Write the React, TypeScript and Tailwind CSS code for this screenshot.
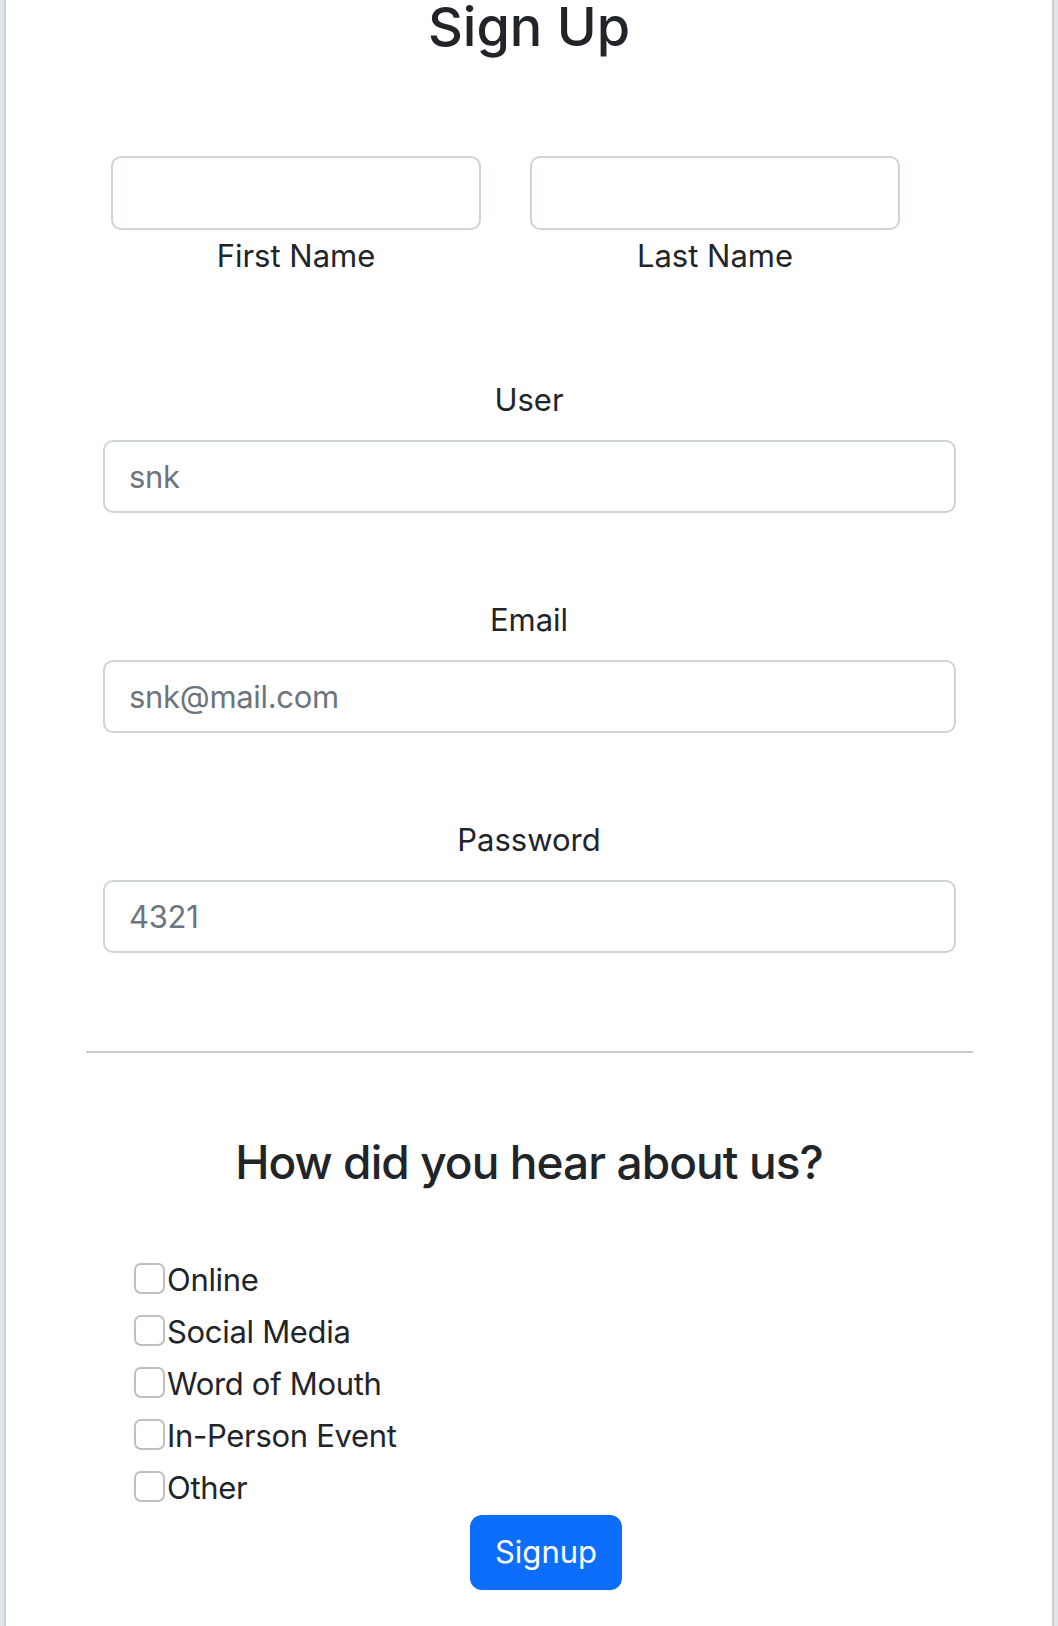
import React from "react";

const font = { fontFamily: 'Inter, "Noto Sans", sans-serif' };

function Field({ label, placeholder }: { label: string; placeholder: string }) {
  return (
    <div>
      <label className="block text-center text-[31px] leading-[48px] text-[#212529]">{label}</label>
      <input
        type="text"
        placeholder={placeholder}
        className="mt-[16px] ml-[97px] block h-[73px] w-[853px] rounded-[10px] border-2 border-[#ced4da] bg-white px-[24px] text-[31px] tracking-[-0.01em] text-[#212529] placeholder:text-[#6c757d] outline-none"
      />
    </div>
  );
}

const options = ["Online", "Social Media", "Word of Mouth", "In-Person Event", "Other"];

export default function App() {
  return (
    <div className="min-h-screen bg-[#dfe5e9] px-[4px]" style={font}>
      <div className="min-h-[1626px] border-x-2 border-[#cbcdcf] bg-white pt-[2px]">
        <h1 className="text-center text-[54px] font-medium leading-[54px] text-[#212529] -mt-[2px]">Sign Up</h1>

        <div className="mt-[102px] ml-[105px] flex gap-[49px]">
          {["First Name", "Last Name"].map((l) => (
            <div key={l} className="w-[370px]">
              <input
                type="text"
                className="block h-[74px] w-full rounded-[10px] border-2 border-[#ced4da] bg-white outline-none"
              />
              <div className="mt-[2px] text-center text-[31px] leading-[48px] text-[#212529]">{l}</div>
            </div>
          ))}
        </div>

        <div className="mt-[96px]">
          <Field label="User" placeholder="snk" />
        </div>
        <div className="mt-[83px]">
          <Field label="Email" placeholder="snk@mail.com" />
        </div>
        <div className="mt-[83px]">
          <Field label="Password" placeholder="4321" />
        </div>

        <div className="mt-[98px] ml-[80px] h-[2px] w-[887px] bg-[#c8c9ca]" />

        <h3 className="mt-[81px] text-center text-[46px] font-medium leading-[56px] tracking-[-0.02em] text-[#212529]">
          How did you hear about us?
        </h3>

        <div className="mt-[64px] ml-[128px]">
          {options.map((o) => (
            <label key={o} className="flex items-start text-[31px] leading-[52px] tracking-[-0.01em] text-[#212529]">
              <input
                type="checkbox"
                className="mt-[9px] h-[31px] w-[31px] shrink-0 appearance-none rounded-[7px] border-2 border-[#bfbfbf] bg-white"
              />
              <span className="ml-[2px]">{o}</span>
            </label>
          ))}
        </div>

        <button
          type="button"
          className="mt-[1px] ml-[464px] flex h-[75px] w-[152px] items-center justify-center rounded-[12px] bg-[#0d6efd] text-[31px] text-white"
        >
          Signup
        </button>
      </div>
    </div>
  );
}
